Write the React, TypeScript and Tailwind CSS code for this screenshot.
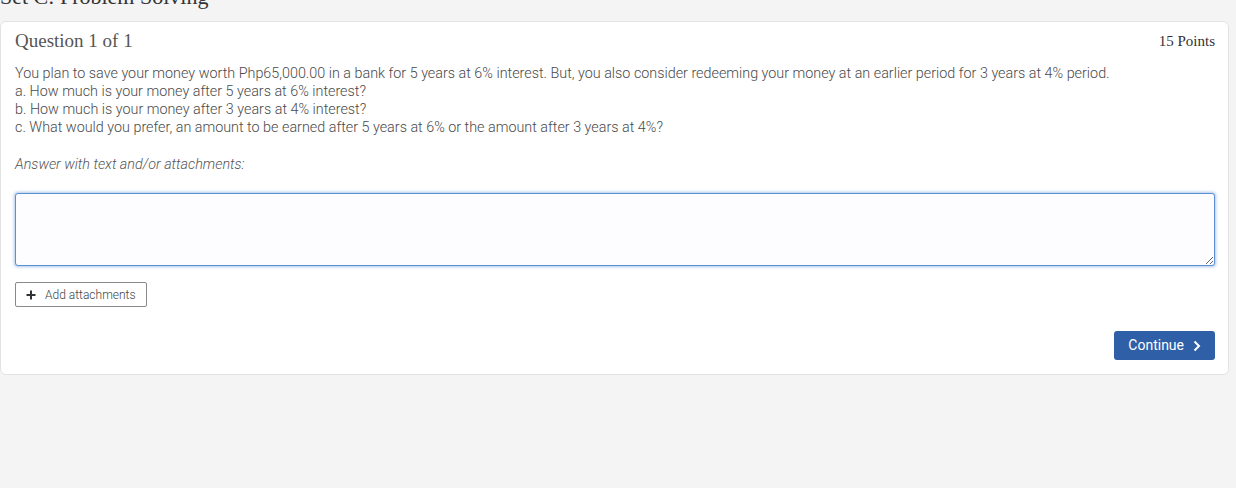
import React from "react";

export default function App() {
  return (
    <div className="w-[1236px] h-[488px] bg-[#f4f4f4] overflow-hidden relative">
      <h1
        className="absolute left-0 top-[-16px] text-[22px] leading-[26px] text-[#333]"
        style={{ fontFamily: '"Liberation Serif", serif' }}
      >
        Set C: Problem Solving
      </h1>
      <div className="pt-[21px] pr-[7px]">
        <div className="bg-white border border-[#e3e3e3] rounded-[6px] pl-[14px] pr-[13px] pt-[9px] pb-[14px]">
          <div className="flex items-center justify-between h-[20px]">
            <div
              className="text-[19px] text-[#555]"
              style={{ fontFamily: '"Liberation Serif", serif' }}
            >
              Question 1 of 1
            </div>
            <div
              className="text-[15px] text-[#333]"
              style={{ fontFamily: '"Liberation Serif", serif' }}
            >
              15 Points
            </div>
          </div>
          <div
            className="mt-[14px] text-[14.35px] leading-[18px] text-[#4a4a4a] font-light"
            style={{ fontFamily: 'Roboto, sans-serif' }}
          >
            <div>
              You plan to save your money worth Php65,000.00 in a bank for 5 years at 6% interest. But, you also consider redeeming your money at an earlier period for 3 years at 4% period.
            </div>
            <div>a. How much is your money after 5 years at 6% interest?</div>
            <div>b. How much is your money after 3 years at 4% interest?</div>
            <div>c. What would you prefer, an amount to be earned after 5 years at 6% or the amount after 3 years at 4%?</div>
            <div className="mt-[19px] italic text-[#555]">Answer with text and/or attachments:</div>
          </div>
          <textarea
            className="mt-[19px] block w-full h-[73px] border border-[#5b8fd6] rounded-[3px] bg-[#fdfdff] shadow-[0_0_3px_1px_rgba(91,143,214,0.5)] outline-none px-[5px] py-[4px] text-[13px]"
            autoFocus
          />
          <button
            className="mt-[16px] flex items-center gap-[9px] h-[25px] px-[10px] border border-[#8a8a8a] rounded-[2px] bg-white text-[12px] text-[#444] font-light"
            style={{ fontFamily: 'Roboto, sans-serif' }}
          >
            <svg width="10" height="10" viewBox="0 0 10 10">
              <path d="M5 0.5v9M0.5 5h9" stroke="#333" strokeWidth="2" />
            </svg>
            Add attachments
          </button>
          <div className="flex justify-end mt-[24px]">
            <button
              className="flex items-center gap-[9px] h-[29px] px-[14px] rounded-[3px] bg-[#2e5fa7] text-white text-[14px]"
              style={{ fontFamily: 'Roboto, sans-serif' }}
            >
              Continue
              <svg width="8" height="12" viewBox="0 0 8 12">
                <path d="M1.5 1.5L6 6l-4.5 4.5" stroke="white" strokeWidth="2" fill="none" />
              </svg>
            </button>
          </div>
        </div>
      </div>
    </div>
  );
}
